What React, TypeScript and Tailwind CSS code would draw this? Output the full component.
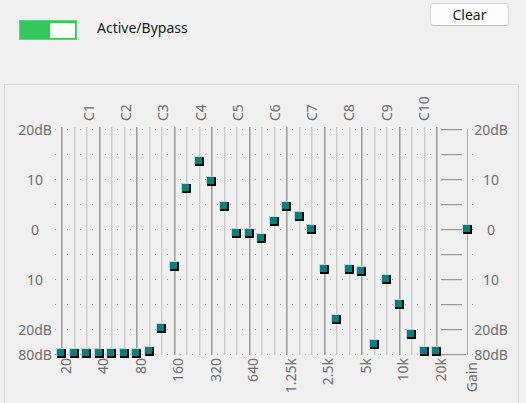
import React from "react";

const FONT = { fontFamily: '"Noto Sans", "Open Sans", sans-serif' };

// y centre of each 1/3-octave thumb (31 bands, 20 Hz .. 20 kHz)
const bandY = [
  353, 353, 353, 353, 353, 353, 353, 350.5, 328, 266, 188, 161, 181, 206, 233, 233,
  238, 221, 206, 216, 228.5, 268.5, 318.5, 268.5, 271, 343.5, 279, 303.5, 333.5, 351, 351,
];
const rows = [129, 154, 179, 204, 229, 254, 279, 304, 329, 354];
const sideLabels: Record<number, string> = { 129: "20dB", 179: "10", 229: "0", 279: "10", 329: "20dB", 354: "80dB" };
const freqLabels = ["20", "40", "80", "160", "320", "640", "1.25k", "2.5k", "5k", "10k", "20k"];

const lineX = (i: number) => Math.round(61 + 12.5 * i);

const Thumb: React.FC<{ cx: number; cy: number }> = ({ cx, cy }) => {
  const x = Math.round(cx) - 5;
  const y = Math.round(cy) - 5;
  return (
    <g>
      <rect x={x + 1} y={y + 1} width={9} height={9} fill="#000" />
      <rect x={x} y={y} width={8} height={8} fill="#008080" />
      <rect x={x} y={y} width={8} height={1} fill="#b9d9d9" />
      <rect x={x} y={y} width={1} height={8} fill="#b9d9d9" />
    </g>
  );
};

const EqGraph: React.FC = () => (
  <svg width={513} height={318} viewBox="5 85 513 318" style={FONT}>
    {/* band tracks */}
    {bandY.map((_, i) => {
      const x = lineX(i);
      const dark = i % 3 === 0;
      return (
        <g key={"l" + i}>
          <rect x={x} y={127} width={1} height={228} fill={dark ? "#9c9c9c" : "#cbcbcb"} />
          <rect x={x + 1} y={127} width={1} height={228} fill={dark ? "#c2c2c2" : "#e0e0e0"} />
        </g>
      );
    })}

    {/* gain track */}
    <rect x={467} y={129} width={1} height={226} fill="#a8a8a8" />
    {rows.map((y) => (
      <g key={"t" + y}>
        <rect x={441} y={y} width={y === 354 ? 25 : 21} height={1} fill="#9a9a9a" />
        <rect x={441} y={y + 1} width={y === 354 ? 25 : 21} height={1} fill="#dcdcdc" />
      </g>
    ))}

    {/* dotted grid */}
    {rows.map((y) => (
      <g key={"d" + y}>
        {Array.from({ length: 31 }, (_, k) => (
          <rect key={k} x={Math.round(54.5 + 12.5 * k)} y={y} width={1} height={1} fill="#9a9a9a" />
        ))}
        <rect x={472} y={y} width={1} height={1} fill="#9a9a9a" />
      </g>
    ))}

    {/* dB labels */}
    {rows
      .filter((y) => sideLabels[y])
      .map((y) => (
        <g key={"s" + y} fill="#6e6e6e" fontSize={14}>
          <text x={35} y={y} textAnchor="middle" dominantBaseline="central">
            {sideLabels[y]}
          </text>
          <text x={491} y={y} textAnchor="middle" dominantBaseline="central">
            {sideLabels[y]}
          </text>
        </g>
      ))}

    {/* channel labels */}
    {Array.from({ length: 10 }, (_, k) => {
      const x = 88.5 + 37.2 * k;
      return (
        <text
          key={"c" + k}
          x={x}
          y={121}
          fill="#6e6e6e"
          fontSize={14}
          dominantBaseline="central"
          transform={`rotate(-90 ${x} 121)`}
        >
          C{k + 1}
        </text>
      );
    })}

    {/* frequency labels */}
    {freqLabels.map((f, k) => {
      const x = 61 + 37.5 * k + 4;
      return (
        <text
          key={f}
          x={x}
          y={358}
          fill="#6e6e6e"
          fontSize={14}
          textAnchor="end"
          dominantBaseline="central"
          transform={`rotate(-90 ${x} 358)`}
        >
          {f}
        </text>
      );
    })}
    <text
      x={471}
      y={362}
      fill="#6e6e6e"
      fontSize={14}
      textAnchor="end"
      dominantBaseline="central"
      transform="rotate(-90 471 362)"
    >
      Gain
    </text>

    {/* thumbs */}
    {bandY.map((y, i) => (
      <Thumb key={"b" + i} cx={61 + 12.5 * i} cy={y} />
    ))}
    <Thumb cx={467} cy={228.5} />
  </svg>
);

const App: React.FC = () => {
  return (
    <div className="w-[526px] h-[403px] overflow-hidden bg-[#f0f0f0] text-[#1a1a1a]" style={FONT}>
      {/* Header */}
      <div className="h-[84px] flex items-start">
        <div className="ml-[19px] mt-[20px] w-[58px] h-[20px] bg-[#34c759] border border-[#5fd27c] flex items-center justify-end pr-[1px]">
          <div className="w-[25px] h-[15px] bg-white" />
        </div>
        <span className="ml-[20px] mt-[18px] text-[14px] leading-[20px]">Active/Bypass</span>
        <button className="ml-auto mr-[17px] mt-[3px] w-[79px] h-[23px] rounded-[4px] border border-[#d6d6d6] border-b-[#c2c2c2] bg-[#fdfdfd] text-[14px] leading-[20px] text-[#1a1a1a]">
          Clear
        </button>
      </div>

      {/* Graphic EQ panel */}
      <div className="ml-[4px] w-[515px] h-[330px] border border-[#dadada]">
        <EqGraph />
      </div>
    </div>
  );
};

export default App;
